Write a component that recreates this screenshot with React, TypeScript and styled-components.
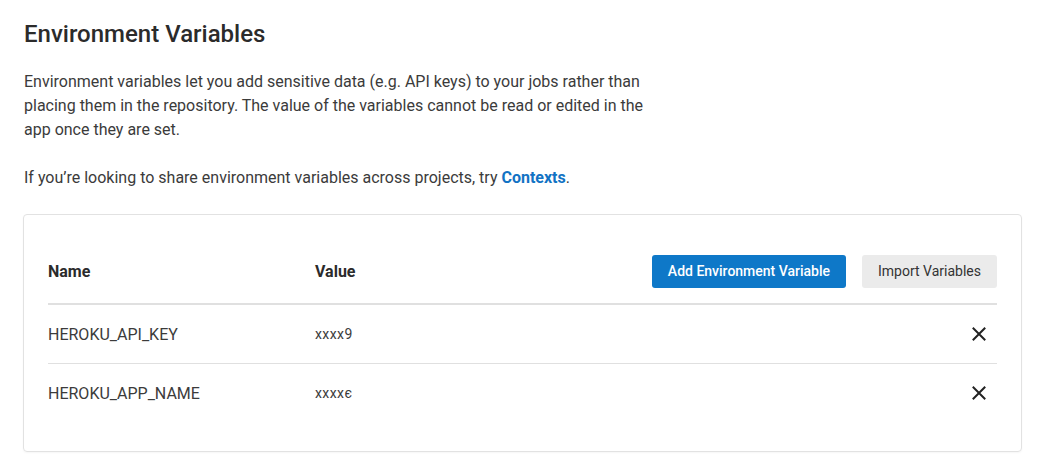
import React from "react";
import styled, { createGlobalStyle } from "styled-components";

const Global = createGlobalStyle`
  html, body { margin: 0; padding: 0; background: #ffffff; }
  body { font-family: Roboto, "Noto Sans", Arial, sans-serif; color: #3b3b3b; }
  * { box-sizing: border-box; }
`;

const Page = styled.div`
  padding: 19px 17px 20px 23px;
  width: 1039px;
`;

const Title = styled.h1`
  margin: 0 0 0 1px;
  font-size: 24px;
  line-height: 30px;
  font-weight: 500;
  color: #2b2b2b;
`;

const Para = styled.p<{ $top: number }>`
  margin: ${(p) => p.$top}px 0 0 1px;
  width: 640px;
  font-size: 16px;
  line-height: 24px;
  color: #3b3b3b;
`;

const Link = styled.a`
  color: #1273c4;
  font-weight: 700;
  text-decoration: none;
`;

const Card = styled.div`
  margin-top: 24px;
  border: 1px solid #e2e2e2;
  border-radius: 4px;
  padding: 24px 24px 29px 24px;
  box-shadow: 0 1px 2px rgba(0,0,0,0.04);
`;

const Row = styled.div<{ $head?: boolean }>`
  display: grid;
  grid-template-columns: 267px 1fr auto;
  align-items: center;
  height: ${(p) => (p.$head ? 65 : 59)}px;
  border-bottom: ${(p) => (p.$head ? "1px solid #e0e0e0" : "none")};
  & + & { border-top: ${(p) => (p.$head ? "none" : "1px solid #e0e0e0")}; }
`;

const HeadCell = styled.div`
  font-size: 16px;
  font-weight: 700;
  color: #2b2b2b;
`;

const NameCell = styled.div`
  font-size: 16px;
  color: #3b3b3b;
`;

const ValueCell = styled.div`
  font-size: 14px;
  letter-spacing: 0.4px;
  color: #3b3b3b;
`;

const Actions = styled.div`
  display: flex;
  gap: 16px;
  align-items: center;
`;

const Button = styled.button<{ $primary?: boolean }>`
  height: 33px;
  padding: 0 16px;
  border: none;
  border-radius: 3px;
  font-family: Roboto, sans-serif;
  font-size: 14px;
  font-weight: ${(p) => (p.$primary ? 500 : 400)};
  background: ${(p) => (p.$primary ? "#0e78c8" : "#ebebeb")};
  color: ${(p) => (p.$primary ? "#ffffff" : "#333333")};
`;

const Delete = styled.button`
  width: 36px;
  height: 30px;
  border: none;
  background: transparent;
  display: flex;
  align-items: center;
  justify-content: center;
  padding: 0;
  color: #222;
`;

const XIcon = () => (
  <svg width="14" height="14" viewBox="0 0 14 14">
    <path d="M1.5 1.5 L12.5 12.5 M12.5 1.5 L1.5 12.5" stroke="#222" strokeWidth="2" strokeLinecap="square" />
  </svg>
);

const vars = [
  { name: "HEROKU_API_KEY", value: "xxxx9" },
  { name: "HEROKU_APP_NAME", value: "xxxxє" },
];

export default function App() {
  return (
    <Page>
      <Global />
      <Title>Environment Variables</Title>
      <Para $top={21}>
        Environment variables let you add sensitive data (e.g. API keys) to your jobs rather than
        placing them in the repository. The value of the variables cannot be read or edited in the
        app once they are set.
      </Para>
      <Para $top={24}>
        If you’re looking to share environment variables across projects, try <Link href="#">Contexts</Link>.
      </Para>
      <Card>
        <Row $head>
          <HeadCell>Name</HeadCell>
          <HeadCell>Value</HeadCell>
          <Actions>
            <Button $primary>Add Environment Variable</Button>
            <Button>Import Variables</Button>
          </Actions>
        </Row>
        {vars.map((v) => (
          <Row key={v.name}>
            <NameCell>{v.name}</NameCell>
            <ValueCell>{v.value}</ValueCell>
            <Delete aria-label="delete"><XIcon /></Delete>
          </Row>
        ))}
      </Card>
    </Page>
  );
}
